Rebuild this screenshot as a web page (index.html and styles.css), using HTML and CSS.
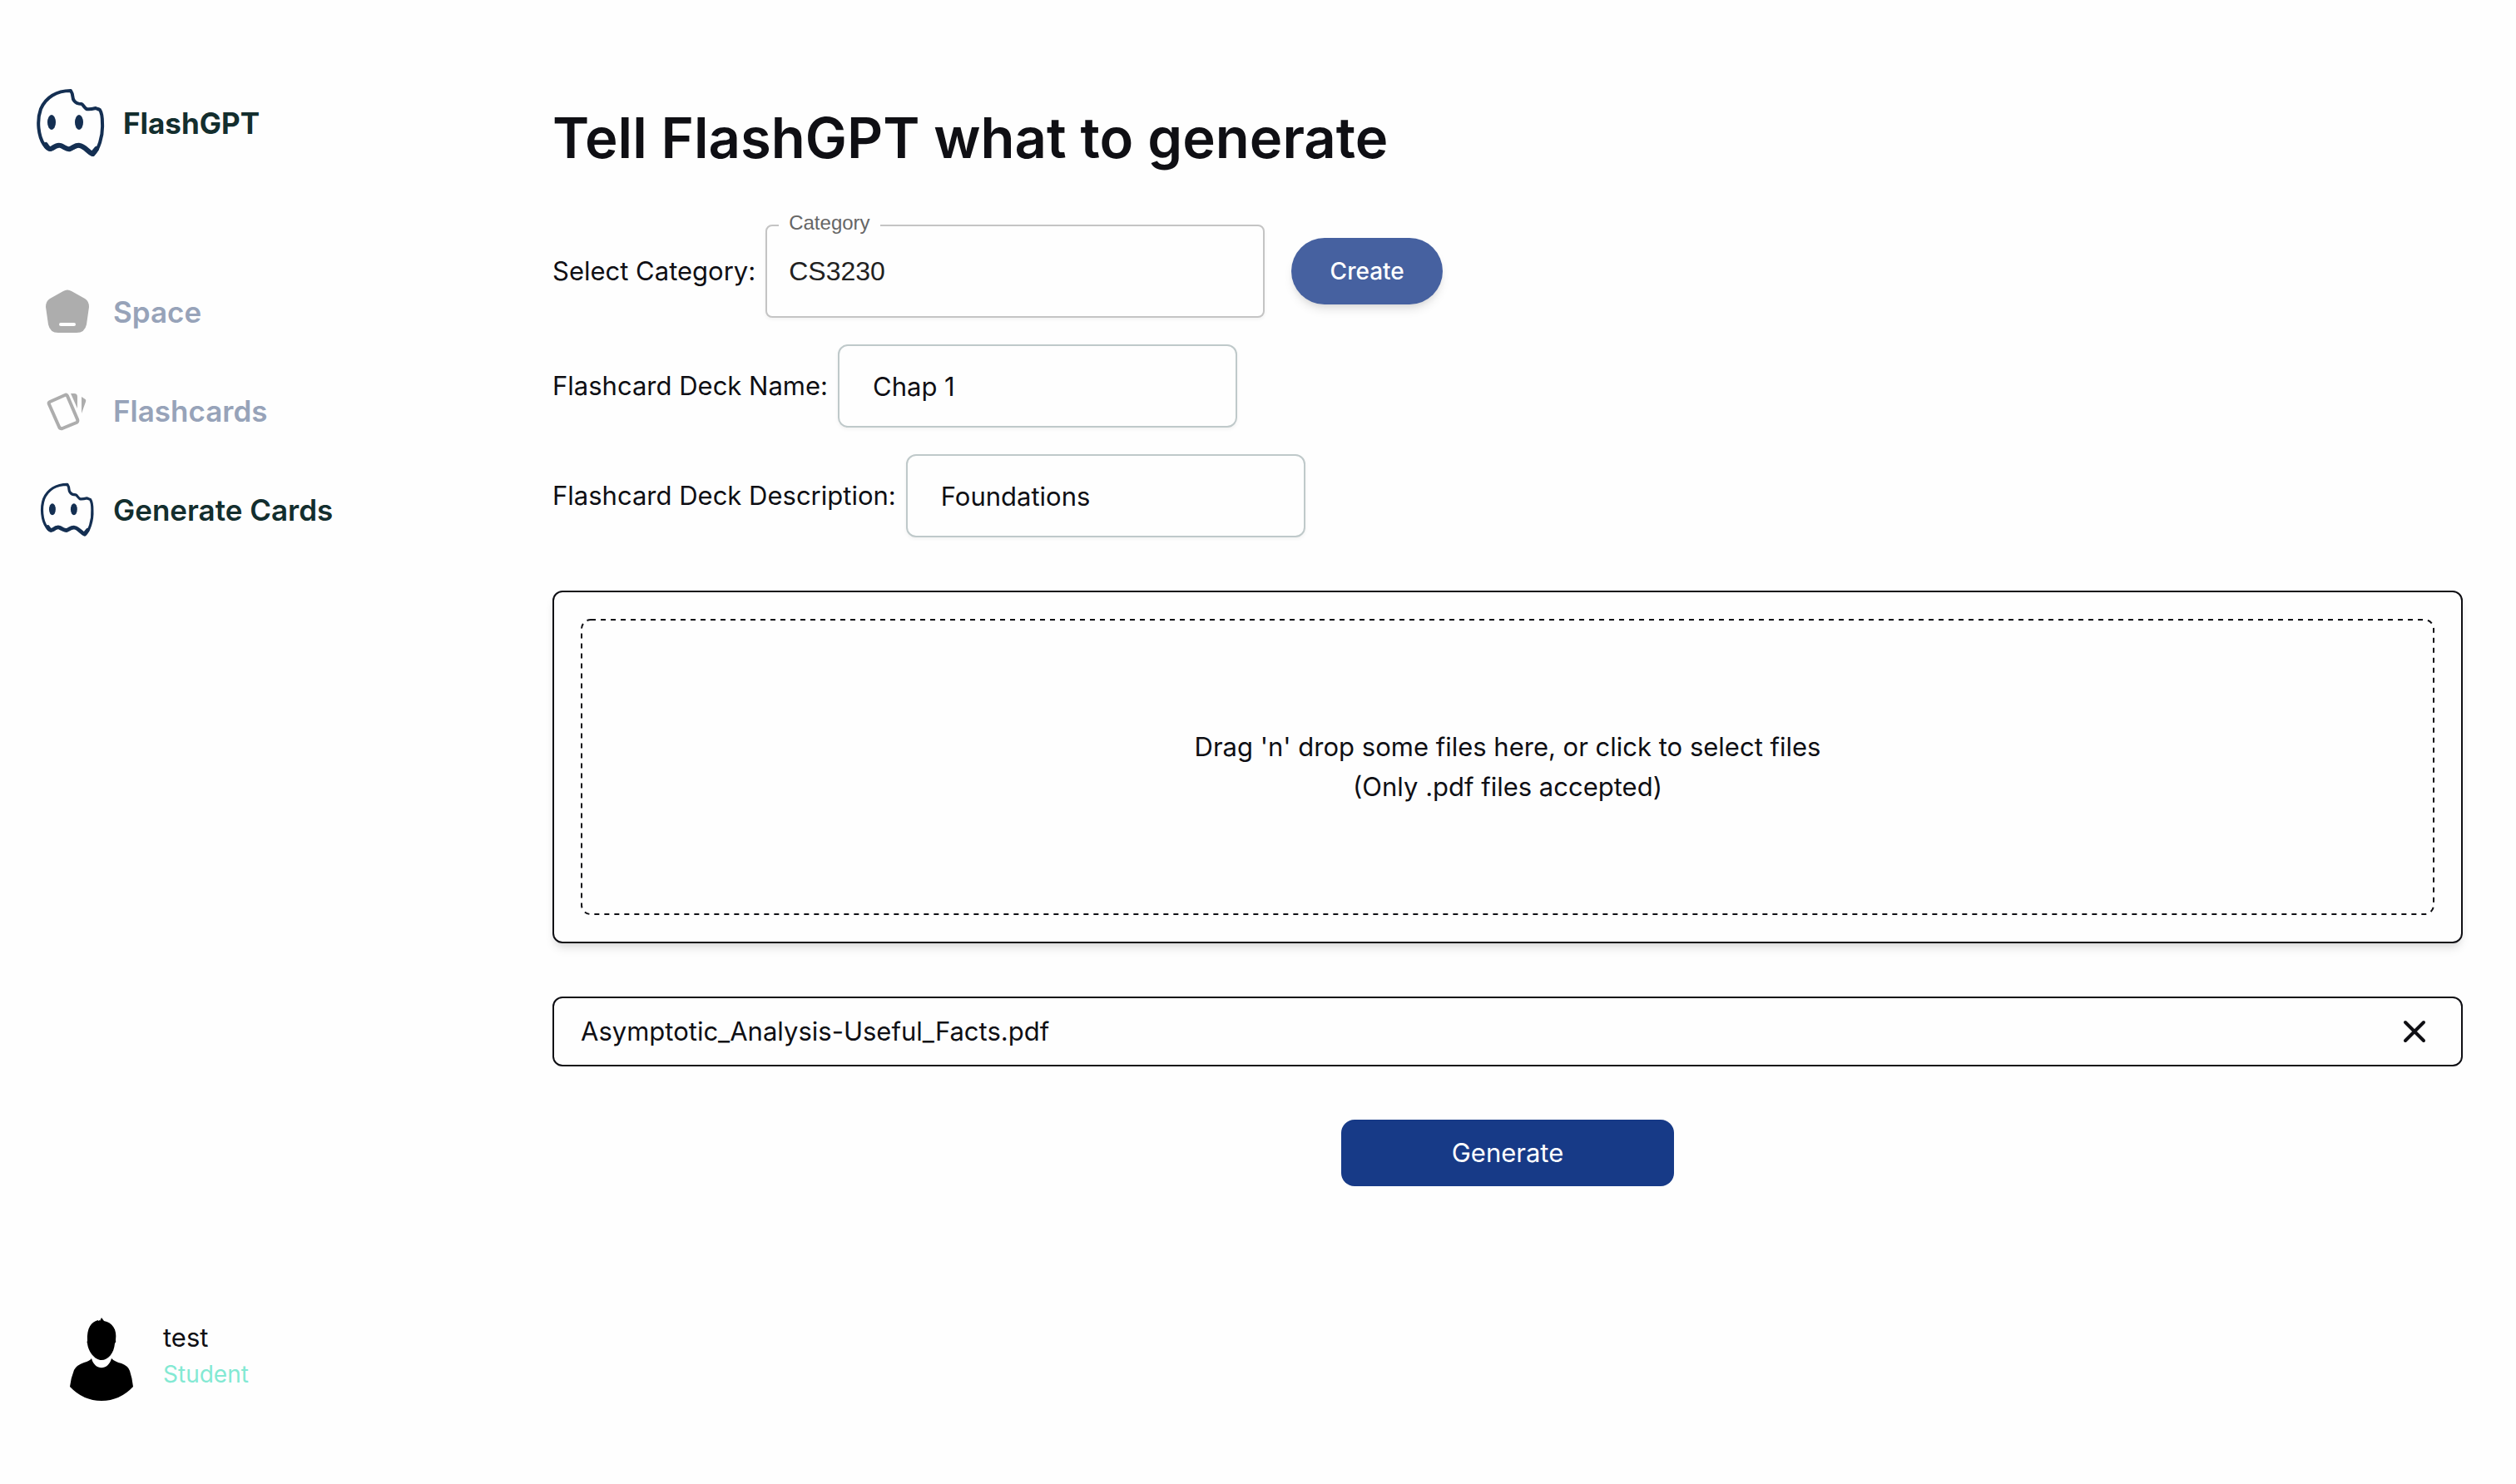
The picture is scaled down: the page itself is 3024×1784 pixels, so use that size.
FILE: index.html
```html
<!DOCTYPE html>
<html lang="en">
<head>
<meta charset="utf-8">
<meta name="viewport" content="width=device-width, initial-scale=1">
<title>FlashGPT</title>
<link rel="stylesheet" href="styles.css">
</head>
<body>
<svg width="0" height="0" class="defs" aria-hidden="true">
  <symbol id="ghost" viewBox="0 0 82 84">
    <path fill="none" stroke="#142f52" stroke-width="4" stroke-linejoin="round" d="M41 3C24 3 11 11 5 25C0 39 2 58 9 68C12 73 15 75 19 73C23 70 25 68 29 69C34 71 36 74 40 74C45 72 47 69 52 69C58 70 62 77 68 80C74 74 80 59 79 42C79 34 78 29 76 26C74 25 73 25 71 24C67 25 63 26 60 25C57 23 56 20 54 19C50 19 47 18 45 15C42 11 45 9 41 3Z"/>
    <path fill="none" stroke="#142f52" stroke-width="6" stroke-linejoin="round" stroke-linecap="round" d="M11 68C14 73 16 74 19 72C23 69 26 68 29 69C34 71 36 74 40 73C45 71 47 68 52 69C58 70 62 77 67 79L72 73"/>
    <ellipse cx="18" cy="41" rx="5" ry="9" fill="#142f52"/>
    <ellipse cx="51" cy="41" rx="5" ry="9" fill="#142f52"/>
  </symbol>
</svg>
<div class="app">
  <aside class="sidebar">
    <a class="brand" href="#">
      <svg class="brand-logo" aria-hidden="true"><use href="#ghost"/></svg>
      <span>FlashGPT</span>
    </a>
    <nav class="nav">
      <a class="nav-link" href="#">
        <svg class="nav-icon" viewBox="0 0 66 66" aria-hidden="true">
          <path fill="#adadad" d="M28 8Q33 5 38 8L54 17Q59 20 59 27L56 48Q54 58 44 58H22Q12 58 10 48L7 27Q7 20 12 17Z"/>
          <rect x="23" y="46" width="20" height="4" rx="2" fill="#fefefe"/>
        </svg>
        <span>Space</span>
      </a>
      <a class="nav-link" href="#">
        <svg class="nav-icon" viewBox="0 0 66 66" aria-hidden="true">
          <path fill="none" stroke="#adadad" stroke-width="4" stroke-linejoin="round" d="M12 22L30 14Q32 13 33 15L45 43Q46 46 44 47L27 54Q24 55 23 52L11 25Q10 23 12 22Z"/>
          <path fill="#adadad" d="M37 12H41Q45 12 45 16V30ZM50 16L53 18Q56 19 55 22L50 36Z"/>
        </svg>
        <span>Flashcards</span>
      </a>
      <a class="nav-link active" href="#" aria-current="page">
        <svg class="nav-icon" aria-hidden="true"><use href="#ghost"/></svg>
        <span>Generate Cards</span>
      </a>
    </nav>
    <div class="user">
      <svg class="avatar" viewBox="0 0 76 100" aria-hidden="true">
        <path d="M21 28C20 12 26 5 34 3L34 4L36 3V4L38 0L41 4C51 6 57 14 55 27Q56 29 54 31C53 43 46 51 38 51C30 51 22 41 21 31Q20 29 21 28Z"/>
        <path d="M26 49C30 64 46 64 50 49Q54 53 62 55Q70 58 72 64Q75 73 76 83Q60 100 38 100Q16 100 0 83Q1 73 5 63Q8 57 17 54Q24 52 26 49Z"/>
      </svg>
      <div>
        <div class="user-name">test</div>
        <div class="user-role">Student</div>
      </div>
    </div>
  </aside>
  <main class="main">
    <h1>Tell FlashGPT what to generate</h1>
    <form class="form">
      <div class="row">
        <span>Select Category:</span>
        <div class="select-box">
          <label for="category">Category</label>
          <select id="category"><option>CS3230</option></select>
        </div>
        <button class="create" type="button">Create</button>
      </div>
      <div class="row">
        <label for="deck-name">Flashcard Deck Name:</label>
        <input id="deck-name" class="text-input" type="text" value="Chap 1">
      </div>
      <div class="row">
        <label for="deck-description">Flashcard Deck Description:</label>
        <input id="deck-description" class="text-input" type="text" value="Foundations">
      </div>
      <div class="drop-card">
        <div class="drop-zone">
          <svg class="dashes" aria-hidden="true"><rect x="1" y="1" rx="11"/></svg>
          <p>Drag 'n' drop some files here, or click to select files</p>
          <p>(Only .pdf files accepted)</p>
        </div>
      </div>
      <div class="file">
        <span>Asymptotic_Analysis-Useful_Facts.pdf</span>
        <button class="remove" type="button" aria-label="Remove file">
          <svg viewBox="0 0 48 48" aria-hidden="true"><path d="M13 13L35 35M35 13L13 35" fill="none" stroke="#0f0f14" stroke-width="4" stroke-linecap="round"/></svg>
        </button>
      </div>
      <button class="generate" type="submit">Generate</button>
    </form>
  </main>
</div>
</body>
</html>
```

FILE: styles.css
```css
* { box-sizing: border-box; }

body {
  margin: 0;
  background: #fefefe;
  color: #0f0f14;
  font-family: Inter, "Liberation Sans", sans-serif;
  font-size: 31px;
  line-height: 48px;
}

button, input, select { font: inherit; color: inherit; }
button { border: 0; padding: 0; cursor: pointer; }
a { text-decoration: none; }
h1, p { margin: 0; }
.defs { position: absolute; }

.app {
  display: grid;
  grid-template-columns: 600px 1fr;
  min-height: 100vh;
}

/* Sidebar */
.sidebar {
  display: flex;
  flex-direction: column;
  padding: 106px 44px 100px;
}

.brand {
  display: flex;
  align-items: center;
  gap: 22px;
  color: #132e2e;
  font-size: 35px;
  font-weight: 700;
}

.brand-logo { width: 82px; height: 84px; }

.nav {
  display: flex;
  flex-direction: column;
  gap: 53px;
  margin-top: 152px;
  padding-left: 4px;
}

.nav-link {
  display: flex;
  align-items: center;
  gap: 22px;
  color: #97a3b9;
  font-size: 35px;
  font-weight: 600;
}

.nav-link.active { color: #132e2e; }
.nav-icon { width: 66px; height: 66px; }

.user {
  display: flex;
  align-items: flex-start;
  gap: 36px;
  margin-top: auto;
  padding-left: 40px;
}

.avatar { width: 76px; height: 100px; }
.user-role { color: #83e9d3; font-size: 28px; line-height: 40px; }

/* Main content */
.main { padding: 122px 64px 64px; }

h1 {
  font-size: 67px;
  font-weight: 600;
  line-height: 88px;
}

.form {
  display: flex;
  flex-direction: column;
  gap: 32px;
  margin-top: 60px;
}

.row { display: flex; align-items: center; gap: 12px; }

.select-box {
  position: relative;
  font-family: "Liberation Sans", Arial, sans-serif;
}

.select-box label {
  position: absolute;
  top: -16px;
  left: 16px;
  padding: 0 12px;
  background: #fefefe;
  color: #666;
  font-size: 24px;
  line-height: 28px;
}

.select-box select {
  display: block;
  width: 600px;
  height: 112px;
  padding: 0 26px;
  appearance: none;
  border: 2px solid #c4c4c4;
  border-radius: 8px;
  background: #fefefe;
  box-shadow: 0 2px 4px rgba(0, 0, 0, 0.05);
  color: #212121;
  font-size: 32px;
}

.create {
  width: 182px;
  height: 80px;
  margin-left: 20px;
  border-radius: 40px;
  background: #4661a0;
  box-shadow: 0 8px 12px -2px rgba(0, 0, 0, 0.1), 0 4px 8px -4px rgba(0, 0, 0, 0.1);
  color: #fff;
  font-size: 28px;
  font-weight: 500;
}

.text-input {
  width: 480px;
  height: 100px;
  padding: 0 40px;
  border: 2px solid #bfc9ca;
  border-radius: 12px;
  background: #fefefe;
  box-shadow: 0 2px 4px rgba(0, 0, 0, 0.05);
}

.drop-card {
  margin: 32px 0;
  padding: 32px;
  border: 2px solid #0f0f14;
  border-radius: 12px;
  box-shadow: 0 8px 12px -2px rgba(0, 0, 0, 0.1), 0 4px 8px -4px rgba(0, 0, 0, 0.1);
}

.drop-zone {
  position: relative;
  padding: 130px 32px;
  text-align: center;
}

.dashes {
  position: absolute;
  inset: 0;
  width: 100%;
  height: 100%;
}

.dashes rect {
  width: calc(100% - 2px);
  height: calc(100% - 2px);
  fill: none;
  stroke: #0f0f14;
  stroke-width: 2px;
  stroke-dasharray: 6px 6px;
}

.file {
  display: flex;
  align-items: center;
  justify-content: space-between;
  padding: 16px 32px;
  border: 2px solid #0f0f14;
  border-radius: 12px;
}

.remove { width: 48px; height: 48px; background: none; }
.remove svg { display: block; }

.generate {
  align-self: center;
  width: 400px;
  height: 80px;
  margin-top: 32px;
  border-radius: 16px;
  background: #173a87;
  color: #fff;
}
```
